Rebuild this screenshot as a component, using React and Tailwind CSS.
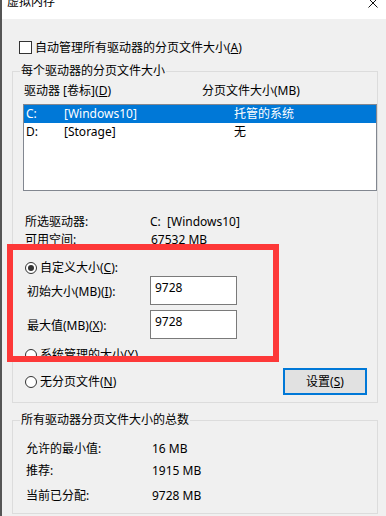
import React from "react"

function Radio({checked}){
  return(
    <span className="flex w-[12px] h-[12px] shrink-0 items-center justify-center rounded-full border border-[#333] bg-white">
      {checked && <span className="w-[6px] h-[6px] rounded-full bg-[#333]"/>}
    </span>
  )
}

function Field({value}){
  return(
    <div className="w-[87px] h-[29px] border border-[#7a7a7a] bg-white pl-[4px] pt-[4px] leading-[14px]">
      {value}
    </div>
  )
}

export default function App(){

  return(

    <div className="relative w-[386px] h-[516px] overflow-hidden bg-[#f0f0f0] border-l-2 border-[#555] text-[12px] text-black font-['Noto_Sans','Noto_Sans_CJK_SC',sans-serif]">

      {/* TITLE BAR */}
      <div className="h-[19px] bg-white flex justify-between overflow-hidden">
        <div className="ml-[5px] -mt-[4px] leading-[12px] text-[12px]">虚拟内存</div>
        <svg className="mr-[8px] -mt-[2px]" width="10" height="10" viewBox="0 0 10 10">
          <path d="M0.5 0.5L9.5 9.5M9.5 0.5L0.5 9.5" stroke="#111" strokeWidth="1"/>
        </svg>
      </div>

      {/* AUTO CHECKBOX */}
      <div className="mt-[22px] ml-[17px] flex items-center h-[13px] leading-[13px]">
        <span className="w-[13px] h-[13px] border border-[#333] bg-white"/>
        <span className="ml-[3px]">自动管理所有驱动器的分页文件大小(<u>A</u>)</span>
      </div>

      {/* PER DRIVE GROUP */}
      <fieldset className="mt-[10px] ml-[10px] w-[366px] border border-[#dcdcdc] pb-[7px]">
        <legend className="ml-[7px] px-[1px] leading-[14px]">每个驱动器的分页文件大小</legend>

        <div className="pl-[10px]">

          <div className="mt-[6px] ml-[1px] flex leading-[14px]">
            <span className="w-[178px]">驱动器 [卷标](<u>D</u>)</span>
            <span>分页文件大小(MB)</span>
          </div>

          <div className="mt-[6px] w-[354px] h-[87px] border border-[#828790] bg-white">
            <div className="h-[18px] flex items-center bg-[#0078d7] text-white pl-[2px]">
              <span className="w-[38px]">C:</span>
              <span className="w-[170px]">[Windows10]</span>
              <span>托管的系统</span>
            </div>
            <div className="h-[18px] flex items-center pl-[2px]">
              <span className="w-[38px]">D:</span>
              <span className="w-[170px]">[Storage]</span>
              <span>无</span>
            </div>
          </div>

          <div className="mt-[24px] pl-[2px] flex leading-[14px]">
            <span className="w-[125px]">所选驱动器:</span>
            <span>C:&nbsp;&nbsp;[Windows10]</span>
          </div>
          <div className="mt-[4px] pl-[2px] flex leading-[14px]">
            <span className="w-[126px]">可用空间:</span>
            <span>67532 MB</span>
          </div>

          <div className="mt-[14px] ml-[2px] flex items-center h-[14px]">
            <Radio checked/>
            <span className="ml-[3px]">自定义大小(<u>C</u>):</span>
          </div>

          <div className="mt-[1px] flex">
            <span className="ml-[4px] w-[123px] pt-[9px] leading-[14px]">初始大小(MB)(<u>I</u>):</span>
            <Field value="9728"/>
          </div>

          <div className="mt-[5px] flex">
            <span className="ml-[4px] w-[123px] pt-[9px] leading-[14px]">最大值(MB)(<u>X</u>):</span>
            <Field value="9728"/>
          </div>

          <div className="mt-[9px] ml-[2px] flex items-center h-[14px]">
            <Radio/>
            <span className="ml-[3px]">系统管理的大小(<u>Y</u>)</span>
          </div>

          <div className="mt-[6px] flex items-center justify-between h-[27px] pr-[10px]">
            <div className="ml-[2px] flex items-center">
              <Radio/>
              <span className="ml-[3px]">无分页文件(<u>N</u>)</span>
            </div>
            <button className="w-[84px] h-[27px] border-2 border-[#0078d7] bg-[#e1e1e1] leading-[14px]">
              设置(<u>S</u>)
            </button>
          </div>

        </div>
      </fieldset>

      {/* TOTALS GROUP */}
      <fieldset className="mt-[10px] ml-[10px] w-[366px] h-[101px] border border-[#dcdcdc]">
        <legend className="ml-[7px] px-[1px] leading-[14px]">所有驱动器分页文件大小的总数</legend>

        <div className="pl-[13px] leading-[14px]">
          <div className="mt-[15px] flex">
            <span className="w-[126px]">允许的最小值:</span>
            <span>16 MB</span>
          </div>
          <div className="mt-[8px] flex">
            <span className="w-[126px]">推荐:</span>
            <span>1915 MB</span>
          </div>
          <div className="mt-[11px] flex">
            <span className="w-[126px]">当前已分配:</span>
            <span>9728 MB</span>
          </div>
        </div>
      </fieldset>

      {/* ANNOTATION */}
      <div className="absolute left-[5px] top-[244px] w-[272px] h-[118px] border-[6px] border-[#fd3838]"/>

    </div>

  )
}
